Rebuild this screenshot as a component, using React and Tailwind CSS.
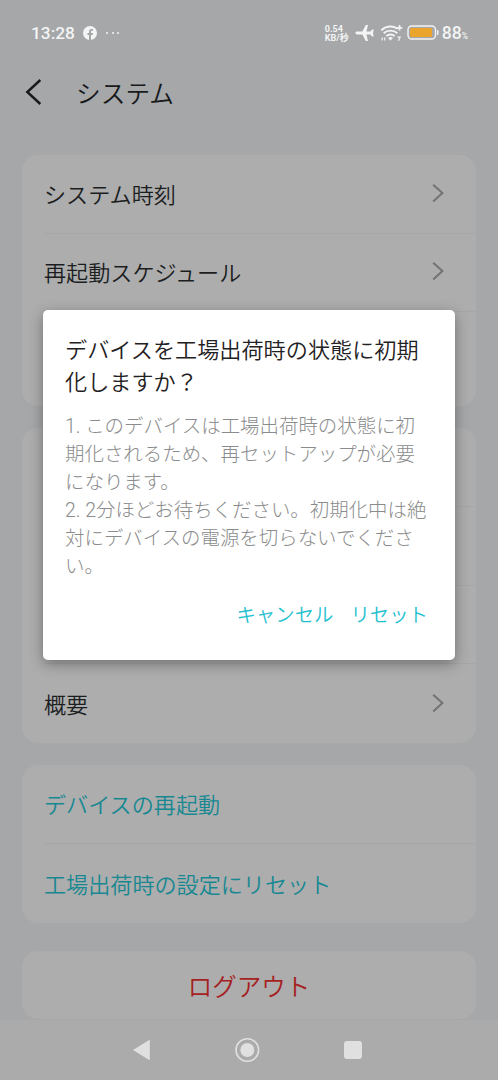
import clsx from "clsx";

function Chevron() {
  return (
    <svg width="14" height="20" viewBox="0 0 14 20" fill="none" className="mb-[2px] flex-shrink-0">
      <path d="M2.2 1.8 11.4 10 2.2 18.4" stroke="#727374" strokeWidth="2" />
    </svg>
  );
}

function FacebookIcon() {
  return (
    <svg width="14" height="14" viewBox="0 0 14 14">
      <circle cx="7" cy="7" r="7" fill="#f4f4f4" />
      <path
        d="M6 14V9H4.500V7H6V5.700c0-1.900 1-2.800 2.700-2.800.5 0 1 .1 1.300.1v1.700h-.9c-.8 0-1.100.4-1.100 1V7h2l-.3 2H8v5z"
        fill="#a5a7a9"
      />
    </svg>
  );
}

function PlaneIcon() {
  return (
    <svg width="19" height="18" viewBox="0 0 19 18" fill="#f4f4f4">
      <path d="M0.500 9c0-.9.700-1.400 1.600-1.400h5.300L10.800 1h2.200l-1.600 6.600h4L17 5.400h1.700L18 9l.7 3.600H17l-1.600-2.200h-4L13 17h-2.200l-3.400-6.600H2.100C1.200 10.400.5 9.900.5 9z" />
    </svg>
  );
}

function WifiIcon() {
  return (
    <svg width="24" height="18" viewBox="0 0 24 18" fill="none" stroke="#f4f4f4" strokeWidth="1.9">
      <path d="M1.300 6.300c4.800-4.700 11.400-4.900 16.400-1.500" />
      <path d="M3.700 9.300c3.700-3.600 9.900-3.600 13.600 0" />
      <path d="M6.300 12.100c2.300-2.200 6.100-2.200 8.400 0" />
      <path d="M8 13.900q2.500-2 5 0L10.500 16.500z" fill="#f4f4f4" stroke="none" />
      <path d="M19.500 1v5.600M16.700 3.800h5.600" strokeWidth="1.700" />
      <path d="M2.200 16.400v-3M4.700 13.400v3" strokeWidth="1.200" />
      <path d="M17.500 13.200h2.600l-1.600 3.600" strokeWidth="1.200" />
    </svg>
  );
}

function BatteryIcon() {
  return (
    <svg width="32" height="16" viewBox="0 0 32 16">
      <rect x="1" y="1" width="27.500" height="13" rx="3.800" fill="none" stroke="#f4f4f4" strokeWidth="1.400" />
      <rect x="3" y="3" width="22" height="9" rx="1.500" fill="#eba52c" />
      <rect x="30" y="5" width="1.500" height="5" rx="0.700" fill="#f4f4f4" />
    </svg>
  );
}

function StatusBar() {
  return (
    <div className="flex h-[66px] items-center pl-[31px] pr-[30px] font-['Roboto','Noto_Sans_CJK_JP',sans-serif] font-medium text-[#f4f4f4]">
      <span className="w-[52px] pt-[2px] text-[17.300px] leading-none">13:28</span>
      <FacebookIcon />
      <span className="ml-[9px] flex gap-[3.500px]">
        <i className="size-[2px] rounded-full bg-[#f4f4f4]" />
        <i className="size-[2px] rounded-full bg-[#f4f4f4]" />
        <i className="size-[2px] rounded-full bg-[#f4f4f4]" />
      </span>
      <div className="ml-auto flex items-center">
        <div className="mr-[4px] w-[26px] whitespace-nowrap pt-[2px] text-[9px] font-bold leading-[9px]">
          <div>0.54</div>
          <div>KB/秒</div>
        </div>
        <PlaneIcon />
        <div className="ml-[6px]">
          <WifiIcon />
        </div>
        <div className="ml-[3px]">
          <BatteryIcon />
        </div>
        <span className="ml-[3px] pt-[2px] text-[17.500px] leading-none">88</span>
        <span className="mt-[6px] text-[8.500px] leading-none">%</span>
      </div>
    </div>
  );
}

function Card({ children, className }) {
  return (
    <div className={clsx("flex flex-col overflow-hidden rounded-[16px] bg-[#adadad]", className)}>
      {children}
    </div>
  );
}

function Row({ label, accent, arrow = true, last }) {
  return (
    <div className="flex flex-1 pl-[22px]">
      <div
        className={clsx(
          "flex flex-1 items-center justify-between pr-[31px]",
          !last && "border-b border-[#a5a6a7]"
        )}
      >
        <span className={clsx("pb-[2px] text-[22.100px] leading-8", accent ? "text-[#178892]" : "text-[#1b1d1f]")}>
          {label}
        </span>
        {arrow && <Chevron />}
      </div>
    </div>
  );
}

function ResetDialog() {
  return (
    <div className="absolute left-[43px] top-[310px] h-[350px] w-[412px] rounded-[5px] bg-white px-[22px] pt-[22px] shadow-[0_4px_14px_rgba(0,0,0,0.35)]">
      <h2 className="whitespace-nowrap text-[22.150px] font-[350] leading-[32px] text-[#1f2123]">
        デバイスを工場出荷時の状態に初期
        <br />
        化しますか？
      </h2>
      <p className="mt-[17px] whitespace-nowrap font-['Roboto','Noto_Sans_CJK_JP',sans-serif] text-[19.450px] font-light leading-[28px] text-[#8a8b8c]">
        1. このデバイスは工場出荷時の状態に初
        <br />
        期化されるため、再セットアップが必要
        <br />
        になります。
        <br />
        2. 2分ほどお待ちください。初期化中は絶
        <br />
        対にデバイスの電源を切らないでくださ
        <br />
        い。
      </p>
      <div className="mt-[19px] flex justify-end gap-[17px] pr-[5px] text-[19.400px] leading-7 text-[#1fc1cf]">
        <button>キャンセル</button>
        <button>リセット</button>
      </div>
    </div>
  );
}

function NavBar() {
  return (
    <div className="mt-auto flex h-[60px] items-center bg-[#ababab] pl-[131px]">
      <svg width="234" height="26" viewBox="0 0 234 26" fill="#e0e0e0">
        <path d="M2 13 17.800 3.200q1-.6 1 .6v18.400q0 1.200-1 .6z" />
        <circle cx="116.300" cy="13" r="11.300" fill="none" stroke="#e0e0e0" strokeWidth="1.600" />
        <circle cx="116.300" cy="13" r="7" />
        <rect x="213" y="4" width="18" height="18" rx="3" />
      </svg>
    </div>
  );
}

export default function App() {
  return (
    <div className="relative flex h-[1080px] w-[498px] flex-col overflow-hidden bg-[#a5a7a9] font-['Noto_Sans_CJK_JP',sans-serif] font-[350]">
      <StatusBar />
      <header className="flex h-[53px] items-center pl-[25px]">
        <svg width="18" height="28" viewBox="0 0 18 28" fill="none" className="mb-[2px]">
          <path d="M15.300 2 2.300 14l13 12" stroke="#17191b" strokeWidth="2.400" />
        </svg>
        <h1 className="ml-[33px] pb-[2px] text-[24.700px] font-[350] leading-9 text-[#17191b]">システム</h1>
      </header>

      <main className="mt-[36px] flex flex-col px-[22px]">
        <Card className="h-[251px]">
          <div className="flex h-[157px] flex-col">
            <Row label="システム時刻" />
            <Row label="再起動スケジュール" />
          </div>
        </Card>
        <Card className="mt-[22px] h-[315px]">
          <Row arrow={false} />
          <Row arrow={false} />
          <Row arrow={false} />
          <Row label="概要" last />
        </Card>
        <Card className="mt-[22px] h-[158px]">
          <Row label="デバイスの再起動" accent arrow={false} />
          <Row label="工場出荷時の設定にリセット" accent arrow={false} last />
        </Card>
        <Card className="mt-[28px] h-[68px] items-center justify-center">
          <button className="pt-[2px] text-[24.500px] leading-9 text-[#a51f23]">ログアウト</button>
        </Card>
      </main>

      <NavBar />
      <ResetDialog />
    </div>
  );
}
